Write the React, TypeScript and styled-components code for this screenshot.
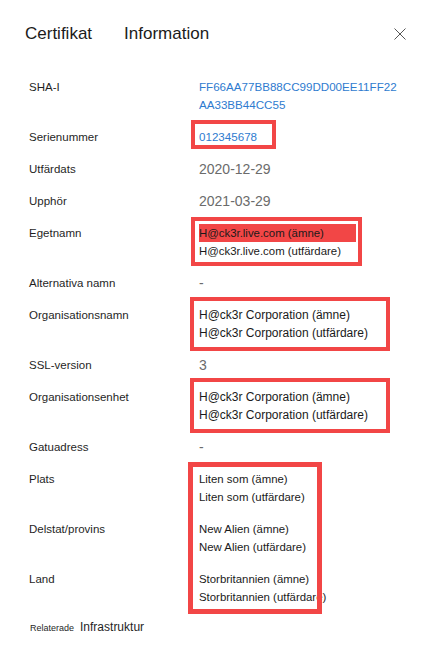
import { FC } from "react"
import styled, { createGlobalStyle } from "styled-components"

const GlobalStyle = createGlobalStyle`
  html, body {
    margin: 0;
    padding: 0;
    background: #ffffff;
  }
  body {
    font-family: "Segoe UI", "Liberation Sans", Arial, sans-serif;
    color: #1f1f1f;
  }
`

const RED = "#f24646"

const Panel = styled.div`
  width: 426px;
  min-height: 653px;
  background: #ffffff;
  overflow: hidden;
`

const Header = styled.header`
  height: 68px;
  padding: 0 20px 0 25px;
  display: flex;
  align-items: center;
  gap: 32px;
`

const HeaderTitle = styled.h1`
  margin: 0;
  font-size: 17px;
  font-weight: 400;
  color: #1b1b1b;
`

const CloseButton = styled.button`
  margin-left: auto;
  width: 12px;
  height: 12px;
  padding: 0;
  border: none;
  background: none;
  display: flex;
  cursor: pointer;
`

const List = styled.div`
  padding-top: 10px;
  display: flex;
  flex-direction: column;
  gap: 14px;
`

const Group = styled.div`
  position: relative;
  display: flex;
  flex-direction: column;
  gap: 14px;
`

const Row = styled.div`
  display: grid;
  grid-template-columns: 170px 1fr;
  padding-left: 29px;
`

const Label = styled.div`
  font-size: 11.5px;
  line-height: 18px;
  color: #1f1f1f;
`

type Tone = "blue" | "gray" | "dark" | "mail" | "place"

const toneSize: Record<Tone, string> = {
  blue: "11.6px",
  gray: "14px",
  dark: "12px",
  mail: "11.4px",
  place: "11.4px",
}

const toneColor: Record<Tone, string> = {
  blue: "#2e7bcf",
  gray: "#6b6b6b",
  dark: "#1a1a1a",
  mail: "#1a1a1a",
  place: "#1a1a1a",
}

const Value = styled.div<{ $tone: Tone }>`
  position: relative;
  font-size: ${(p) => toneSize[p.$tone]};
  line-height: 18px;
  color: ${(p) => toneColor[p.$tone]};
`

const Line = styled.div<{ $marked?: boolean }>`
  width: ${(p) => (p.$marked ? "157px" : "auto")};
  background: ${(p) => (p.$marked ? RED : "transparent")};
  white-space: nowrap;
`

const Frame = styled.div<{
  $top: number
  $left: number
  $width: number
  $height: number
  $border?: number
}>`
  position: absolute;
  top: ${(p) => p.$top}px;
  left: ${(p) => p.$left}px;
  width: ${(p) => p.$width}px;
  height: ${(p) => p.$height}px;
  box-sizing: border-box;
  border: ${(p) => p.$border ?? 4}px solid ${RED};
  pointer-events: none;
`

const Footer = styled.div`
  padding: 14px 0 0 30px;
  display: flex;
  align-items: baseline;
  gap: 6px;
`

const FooterSmall = styled.span`
  font-size: 9px;
  color: #1f1f1f;
`

const FooterText = styled.span`
  font-size: 12px;
  color: #1f1f1f;
`

type FrameBox = { top: number; left: number; width: number; height: number }

interface Field {
  label: string
  lines: string[]
  tone: Tone
  frame?: FrameBox
  marked?: boolean
}

const fields: Field[] = [
  { label: "SHA-I", lines: ["FF66AA77BB88CC99DD00EE11FF22", "AA33BB44CC55"], tone: "blue" },
  {
    label: "Serienummer",
    lines: ["012345678"],
    tone: "blue",
    frame: { top: -8, left: -8, width: 85, height: 29 },
  },
  { label: "Utfärdats", lines: ["2020-12-29"], tone: "gray" },
  { label: "Upphör", lines: ["2021-03-29"], tone: "gray" },
  {
    label: "Egetnamn",
    lines: ["H@ck3r.live.com (ämne)", "H@ck3r.live.com (utfärdare)"],
    tone: "mail",
    marked: true,
    frame: { top: -7, left: -8, width: 171, height: 49 },
  },
  { label: "Alternativa namn", lines: ["-"], tone: "gray" },
  {
    label: "Organisationsnamn",
    lines: ["H@ck3r Corporation (ämne)", "H@ck3r Corporation (utfärdare)"],
    tone: "dark",
    frame: { top: -9, left: -9, width: 200, height: 54 },
  },
  { label: "SSL-version", lines: ["3"], tone: "gray" },
  {
    label: "Organisationsenhet",
    lines: ["H@ck3r Corporation (ämne)", "H@ck3r Corporation (utfärdare)"],
    tone: "dark",
    frame: { top: -10, left: -9, width: 200, height: 55 },
  },
  { label: "Gatuadress", lines: ["-"], tone: "gray" },
]

const placeFields: Field[] = [
  { label: "Plats", lines: ["Liten som (ämne)", "Liten som (utfärdare)"], tone: "place" },
  { label: "Delstat/provins", lines: ["New Alien (ämne)", "New Alien (utfärdare)"], tone: "place" },
  { label: "Land", lines: ["Storbritannien (ämne)", "Storbritannien (utfärdare)"], tone: "place" },
]

const FieldRow: FC<{ field: Field }> = ({ field }) => (
  <Row>
    <Label>{field.label}</Label>
    <Value $tone={field.tone}>
      {field.lines.map((line, index) => (
        <Line key={index} $marked={field.marked && index === 0}>
          {line}
        </Line>
      ))}
      {field.frame && (
        <Frame
          $top={field.frame.top}
          $left={field.frame.left}
          $width={field.frame.width}
          $height={field.frame.height}
        />
      )}
    </Value>
  </Row>
)

const CloseIcon = () => (
  <svg width="12" height="12" viewBox="0 0 12 12">
    <path d="M0.5 0.5 L11.5 11.5 M11.5 0.5 L0.5 11.5" stroke="#555" strokeWidth="1" fill="none" />
  </svg>
)

const App: FC = () => {
  return (
    <Panel>
      <GlobalStyle />
      <Header>
        <HeaderTitle>Certifikat</HeaderTitle>
        <HeaderTitle>Information</HeaderTitle>
        <CloseButton aria-label="Stäng">
          <CloseIcon />
        </CloseButton>
      </Header>

      <List>
        {fields.map((field) => (
          <FieldRow key={field.label} field={field} />
        ))}

        <Group>
          {placeFields.map((field) => (
            <FieldRow key={field.label} field={field} />
          ))}
          <Frame $top={-8} $left={188} $width={134} $height={152} $border={5} />
        </Group>
      </List>

      <Footer>
        <FooterSmall>Relaterade</FooterSmall>
        <FooterText>Infrastruktur</FooterText>
      </Footer>
    </Panel>
  )
}

export default App
